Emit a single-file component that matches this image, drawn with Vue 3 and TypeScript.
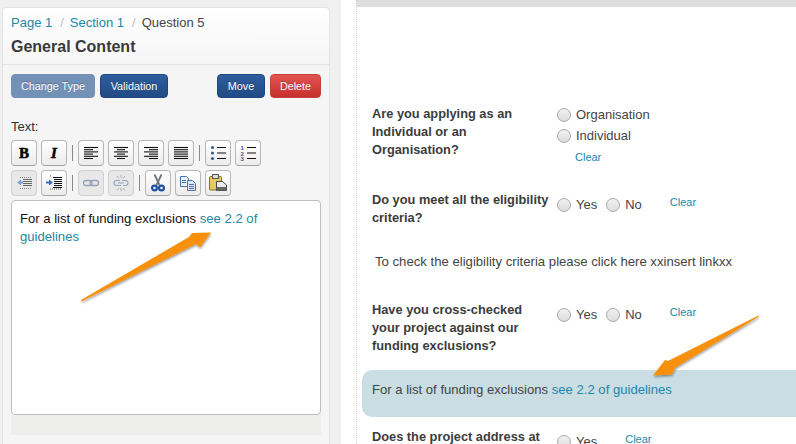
<script setup lang="ts">
// toolbar rows, 'sep' draws the little divider
const rowOne = ['bold', 'italic', 'sep', 'left', 'center', 'right', 'justify', 'sep', 'bullets', 'numbers']
const rowTwo = ['outdent', 'indent', 'sep', 'link', 'unlink', 'sep', 'cut', 'copy', 'paste']
const disabled = ['outdent', 'link', 'unlink']

const alignLines: Record<string, number[][]> = {
  left: [[3, 17], [3, 12], [3, 17], [3, 12], [3, 17], [3, 12]],
  center: [[3, 17], [6, 14], [3, 17], [6, 14], [3, 17], [6, 14]],
  right: [[3, 17], [8, 17], [3, 17], [8, 17], [3, 17], [8, 17]],
  justify: [[3, 17], [3, 17], [3, 17], [3, 17], [3, 17], [3, 17]]
}
</script>

<template>
  <div class="page">
    <aside class="side">
      <div class="panel">
        <header class="panel-head">
          <div class="crumbs">
            <a>Page 1</a><span class="slash">/</span><a>Section 1</a><span class="slash">/</span><span>Question 5</span>
          </div>
          <h2>General Content</h2>
        </header>
        <div class="panel-body">
          <div class="actions">
            <button class="btn faded">Change Type</button>
            <button class="btn blue w-validation">Validation</button>
            <span class="spacer"></span>
            <button class="btn blue w-move">Move</button>
            <button class="btn red">Delete</button>
          </div>
          <div class="field-label">Text:</div>
          <div v-for="(row, r) in [rowOne, rowTwo]" :key="r" class="tools">
            <template v-for="(tool, i) in row" :key="i">
              <i v-if="tool === 'sep'" class="sep"></i>
              <span v-else class="tool" :class="{ off: disabled.includes(tool) }">
                <b v-if="tool === 'bold'" class="glyph-b">B</b>
                <b v-else-if="tool === 'italic'" class="glyph-i">I</b>
                <svg v-else width="20" height="20" viewBox="0 0 20 20">
                  <g v-if="alignLines[tool]" stroke="#111" stroke-width="1.1">
                    <line v-for="(l, n) in alignLines[tool]" :key="n" :x1="l[0]" :x2="l[1]" :y1="4.5 + n * 2.2" :y2="4.5 + n * 2.2" />
                  </g>
                  <g v-else-if="tool === 'bullets'">
                    <circle cx="4.5" cy="4.5" r="1.6" fill="#3b5a94" />
                    <circle cx="4.5" cy="10" r="1.6" fill="#3b5a94" />
                    <circle cx="4.5" cy="15.5" r="1.6" fill="#3b5a94" />
                    <path d="M9 4.5h9M9 10h9M9 15.5h9" stroke="#111" fill="none" />
                  </g>
                  <g v-else-if="tool === 'numbers'">
                    <text class="num" x="2.5" y="7">1</text>
                    <text class="num" x="2.5" y="12.500">2</text>
                    <text class="num" x="2.5" y="18">3</text>
                    <path d="M9 4.500h9M9 10h9M9 15.500h9" stroke="#111" fill="none" />
                  </g>
                  <g v-else-if="tool === 'outdent'">
                    <path d="M9 6.500h9M9 8.500h9M9 10.500h9M9 12.500h9" stroke="#666" fill="none" />
                    <path d="M6 4.500h12M6 15.500h12" stroke="#888" stroke-dasharray="1 1" fill="none" />
                    <path d="M3 9.500l4-3v2h2v2h-2v2z" fill="#7d9fd4" />
                  </g>
                  <g v-else-if="tool === 'indent'">
                    <path d="M9 4.500h9M10 6.500h8M10 8.500h8M10 10.500h8M10 12.500h8M9 14.500h9" stroke="#111" fill="none" />
                    <path d="M9 9.500l-4-3v2h-3v2h3v2z" fill="#3b6cc0" />
                    <path d="M6 3h1M6 16h12" stroke="#555" stroke-dasharray="1 1" fill="none" />
                  </g>
                  <g v-else-if="tool === 'link'" fill="none" stroke="#95a3ba" stroke-width="1.300">
                    <rect x="2.500" y="7.500" width="8.500" height="5" rx="2.500" />
                    <rect x="9" y="7.500" width="8.500" height="5" rx="2.500" />
                  </g>
                  <g v-else-if="tool === 'unlink'" fill="none" stroke="#95a3ba" stroke-width="1.100">
                    <path d="M9 7.500h-3.500a2.500 2.500 0 0 0 0 5h4.500M11 7.500h3.500a2.500 2.500 0 0 1 0 5h-2.500M7 10h6" />
                    <path d="M10 2v3M6 3l2 2.500M14 3l-2 2.500M10 15v3M6 17.500l2-2.500M14 17.500l-2-2.500" stroke="#a8a8a8" stroke-width="0.900" />
                  </g>
                  <g v-else-if="tool === 'cut'">
                    <path d="M6.500 1.500l5 10.500M13.500 1.500l-5 10.500" stroke="#70777f" stroke-width="1.800" fill="none" />
                    <circle cx="6.500" cy="15" r="2.400" fill="none" stroke="#1f4fa0" stroke-width="2.200" />
                    <circle cx="13.500" cy="15" r="2.400" fill="none" stroke="#1f4fa0" stroke-width="2.200" />
                  </g>
                  <g v-else-if="tool === 'copy'" stroke="#4a72b0" fill="#eaf1fb">
                    <path d="M2.500 3.500h6l2 2v8h-8z" />
                    <path d="M9.500 7.500h5l3 3v7h-8z" fill="#dbe7f8" />
                    <path d="M4 7.500h4M4 9.500h4M11 11.500h5M11 13.500h5M11 15.500h5" fill="none" />
                  </g>
                  <g v-else-if="tool === 'paste'">
                    <rect x="1.500" y="3.500" width="12" height="13.500" rx="1" fill="#e8ca62" stroke="#8a6d1f" />
                    <rect x="4.500" y="1.500" width="6" height="4" fill="#dcdcdc" stroke="#555" />
                    <path d="M8.500 8.500h6l4 3.500v5.500h-10z" fill="#ececec" stroke="#444" />
                    <path d="M8.500 14h10v3.500h-10z" fill="#666" />
                  </g>
                </svg>
              </span>
            </template>
          </div>
          <div class="editor">
            For a list of funding exclusions <a>see 2.2 of</a><br /><a>guidelines</a>
          </div>
          <div class="editor-foot"></div>
        </div>
      </div>
    </aside>

    <main class="preview">
      <div class="top-bar"></div>

      <section class="question first">
        <div class="q-label">Are you applying as an Individual or an Organisation?</div>
        <div class="stack">
          <label class="opt"><i class="radio"></i>Organisation</label>
          <label class="opt"><i class="radio"></i>Individual</label>
          <a class="clear under">Clear</a>
        </div>
      </section>

      <section class="question second">
        <div class="q-label">Do you meet all the eligibility criteria?</div>
        <div class="inline">
          <label class="opt"><i class="radio"></i>Yes</label>
          <label class="opt"><i class="radio"></i>No</label>
          <a class="clear">Clear</a>
        </div>
      </section>

      <p class="note">To check the eligibility criteria please click here xxinsert linkxx</p>

      <section class="question third">
        <div class="q-label">Have you cross-checked your project against our funding exclusions?</div>
        <div class="inline">
          <label class="opt"><i class="radio"></i>Yes</label>
          <label class="opt"><i class="radio"></i>No</label>
          <a class="clear">Clear</a>
        </div>
      </section>

      <div class="highlight">For a list of funding exclusions <a>see 2.2 of guidelines</a></div>

      <section class="question fourth">
        <div class="q-label">Does the project address at</div>
        <div class="inline">
          <label class="opt"><i class="radio"></i>Yes</label>
          <a class="clear">Clear</a>
        </div>
      </section>
    </main>

    <!-- callout arrows drawn over the screenshot -->
    <svg class="arrows" width="796" height="444" viewBox="0 0 796 444">
      <defs>
        <filter id="soft" x="-10%" y="-10%" width="120%" height="130%">
          <feDropShadow dx="0.500" dy="1.500" stdDeviation="1" flood-color="#000" flood-opacity="0.400" />
        </filter>
      </defs>
      <path d="M81 300 L189 237 L192 233 L211 232.500 L200 247.500 L196 244 L81.500 301.500 Z" fill="#f6900f" filter="url(#soft)" />
      <path d="M758.500 315.500 L668 361 L665 360 L653 375.500 L672 374.500 L675 368 L759 316.500 Z" fill="#f6900f" filter="url(#soft)" />
    </svg>
  </div>
</template>

<style scoped>
.page {
  position: relative;
  display: flex;
  width: 796px;
  height: 444px;
  overflow: hidden;
  background: #fff;
  font-family: 'Liberation Sans', Arial, sans-serif;
  color: #333;
}
a {
  color: #2387a8;
}
.side {
  width: 341px;
  flex: none;
  padding: 7px 11px 0 2px;
  box-sizing: border-box;
  background: #f0f0f0;
}
.panel {
  height: 445px;
  background: #f5f5f5;
  border: 1px solid #e4e4e4;
  border-radius: 4px;
  box-sizing: border-box;
}
.panel-head {
  height: 57px;
  padding: 5px 8px 0;
  box-sizing: border-box;
  border-bottom: 1px solid #e2e2e2;
  border-radius: 4px 4px 0 0;
  background: linear-gradient(#fff, #f5f5f5);
}
.crumbs {
  font-size: 13px;
  line-height: 20px;
  color: #444;
}
.slash {
  color: #bbb;
  padding: 0 6px 0 8px;
}
h2 {
  margin: 4px 0 0;
  font-size: 16px;
  line-height: 20px;
  font-weight: bold;
  color: #3a3a3a;
}
.panel-body {
  padding: 9px 8px 0;
}
.actions {
  display: flex;
  gap: 5px;
}
.spacer {
  flex: 1;
}
.btn {
  height: 24px;
  padding: 0;
  border: 1px solid #1f4680;
  border-radius: 4px;
  font: 10.8px 'Liberation Sans', Arial, sans-serif;
  color: #fff;
  text-shadow: 0 -1px 0 rgba(0, 0, 0, 0.25);
}
.btn.blue {
  background: linear-gradient(#2f5e9e, #204a84);
}
.w-validation {
  width: 68px;
}
.w-move {
  width: 48px;
}
.btn.faded {
  background: #7390b6;
  border-color: #7390b6;
  width: 84px;
}
.btn.red {
  width: 51px;
  background: linear-gradient(#e4534f, #c6302c);
  border-color: #c6403c;
}
.field-label {
  margin: 20px 0 4px;
  font-size: 13px;
  line-height: 18px;
}
.tools {
  display: flex;
  align-items: center;
  gap: 4px;
  height: 26px;
  margin-bottom: 4px;
}
.tool {
  display: flex;
  align-items: center;
  justify-content: center;
  width: 26px;
  height: 26px;
  box-sizing: border-box;
  border: 1px solid #b8b8b8;
  border-bottom-color: #a4a4a4;
  border-radius: 4px;
  background: linear-gradient(#fff, #ececec);
}
.tool.off {
  background: #e8e8e8;
  border-color: #cfcfcf;
}
.glyph-b {
  font: bold 15px 'Liberation Serif', serif;
  -webkit-text-stroke: 0.5px #000;
  color: #000;
}
.glyph-i {
  font: italic bold 15px 'Liberation Serif', serif;
  -webkit-text-stroke: 0.5px #000;
  color: #000;
}
.num {
  font: bold 6px 'Liberation Sans', sans-serif;
  fill: #3b5a94;
}
.sep {
  width: 1px;
  height: 16px;
  margin: 0 1px;
  background: #888;
}
.editor {
  height: 215px;
  padding: 9px 8px 0;
  box-sizing: border-box;
  background: #fff;
  border: 1px solid #bdbdbd;
  border-radius: 4px;
  font-size: 13.1px;
  line-height: 18px;
  color: #111;
}
.editor-foot {
  height: 20px;
  background: #eeeeec;
}
.preview {
  flex: 1;
  position: relative;
  margin-left: 15px;
  border-left: 1px dotted #ccc;
  min-width: 0;
}
.top-bar {
  height: 7px;
  background: #ddd;
}
.question {
  display: flex;
  padding-left: 15px;
}
.q-label {
  width: 180px;
  margin-right: 5px;
  flex: none;
  font-size: 12.8px;
  font-weight: bold;
  line-height: 18px;
  color: #3c3c3c;
}
.first {
  margin-top: 98px;
}
.second {
  margin-top: 27px;
}
.third {
  margin-top: 30px;
}
.fourth {
  margin-top: 11px;
}
.stack {
  display: flex;
  flex-direction: column;
  margin-top: -1px;
}
.inline {
  display: flex;
  align-items: flex-start;
  padding-top: 3px;
}
.opt {
  display: flex;
  align-items: center;
  height: 21px;
  font-size: 13px;
  color: #444;
}
.inline .opt {
  margin-right: 9px;
}
.radio {
  width: 14px;
  height: 14px;
  margin-right: 5px;
  box-sizing: border-box;
  border: 1px solid #a9a9a9;
  border-radius: 50%;
  background: linear-gradient(#f2f2f2, #dcdcdc);
}
.clear {
  font-size: 11px;
  line-height: 14px;
}
.clear.under {
  margin: 4px 0 0 18px;
}
.inline .clear {
  margin: 1px 0 0 19px;
}
.note {
  margin: 26px 0 0 18px;
  font-size: 13.15px;
  line-height: 18px;
  color: #444;
}
.highlight {
  height: 47px;
  margin: 15px 0 0 5px;
  padding: 0 0 9px 10px;
  box-sizing: border-box;
  display: flex;
  align-items: center;
  white-space: pre;
  background: #c9dde3;
  border-radius: 10px 0 0 10px;
  font-size: 13.1px;
  color: #444;
}
.arrows {
  position: absolute;
  left: 0;
  top: 0;
  pointer-events: none;
}
</style>
